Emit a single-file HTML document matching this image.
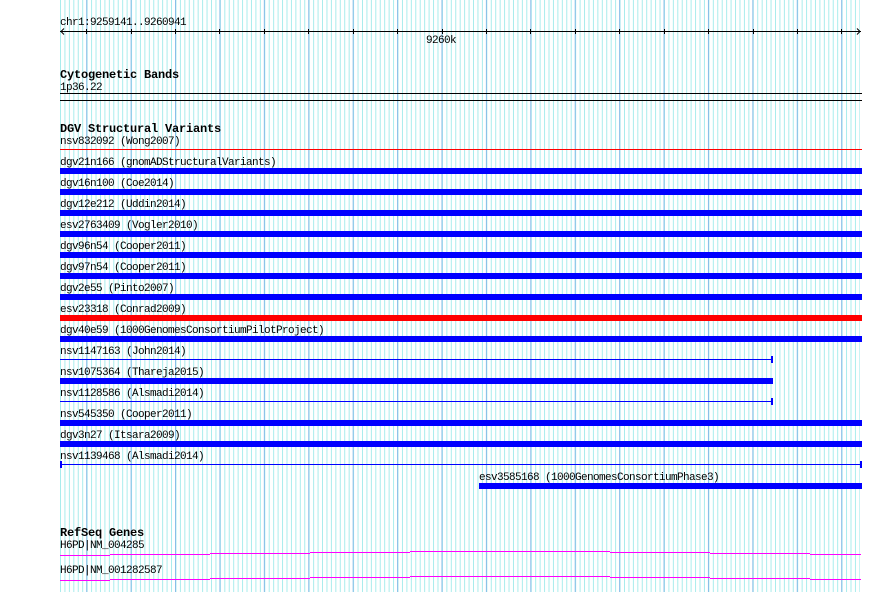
<!DOCTYPE html>
<html><head><meta charset="utf-8"><style>
html,body{margin:0;padding:0;background:#fff;width:890px;height:592px;overflow:hidden}
svg{display:block}
rect,line,path{shape-rendering:crispEdges}
text{font-family:"Liberation Mono","DejaVu Sans Mono",monospace;font-size:11px;letter-spacing:-0.6px;fill:#000}
.b{font-weight:bold;font-size:12px;letter-spacing:-0.2px}
</style></head><body>
<svg width="890" height="592" xmlns="http://www.w3.org/2000/svg">
<defs>
<pattern id="mn" patternUnits="userSpaceOnUse" x="60" y="0" width="4.441" height="10"><rect x="0" y="0" width="1" height="10" fill="#a8ecec"/></pattern>
<pattern id="mj" patternUnits="userSpaceOnUse" x="86.2" y="0" width="44.41" height="10"><rect x="0" y="0" width="1" height="10" fill="#88bde8"/></pattern>
</defs>
<rect x="60" y="0" width="800" height="592" fill="url(#mn)"/>
<rect x="60" y="0" width="800" height="592" fill="url(#mj)"/>

<text x="60" y="25">chr1:9259141..9260941</text>
<rect x="60" y="31" width="801" height="1" fill="#000"/>
<path d="M64 28.5 L61 31.5 L64 34.5 M857 28.5 L860 31.5 L857 34.5" stroke="#000" fill="none" style="shape-rendering:auto"/>
<g fill="#000">
<rect x="86" y="29" width="1" height="5"/><rect x="131" y="29" width="1" height="5"/><rect x="175" y="29" width="1" height="5"/><rect x="219" y="29" width="1" height="5"/><rect x="264" y="29" width="1" height="5"/><rect x="308" y="29" width="1" height="5"/><rect x="353" y="29" width="1" height="5"/><rect x="397" y="29" width="1" height="5"/><rect x="442" y="29" width="1" height="5"/><rect x="486" y="29" width="1" height="5"/><rect x="530" y="29" width="1" height="5"/><rect x="575" y="29" width="1" height="5"/><rect x="619" y="29" width="1" height="5"/><rect x="664" y="29" width="1" height="5"/><rect x="708" y="29" width="1" height="5"/><rect x="753" y="29" width="1" height="5"/><rect x="797" y="29" width="1" height="5"/><rect x="841" y="29" width="1" height="5"/>
</g>
<text x="426" y="43">9260k</text>

<text class="b" x="60" y="78">Cytogenetic Bands</text>
<text x="60" y="90">1p36.22</text>
<rect x="60" y="93" width="802" height="1" fill="#000"/>
<rect x="60" y="100" width="802" height="1" fill="#000"/>

<text class="b" x="60" y="132">DGV Structural Variants</text>
<text x="60" y="144">nsv832092 (Wong2007)</text>
<rect x="60" y="149" width="802" height="1" fill="#f00"/>
<text x="60" y="165">dgv21n166 (gnomADStructuralVariants)</text>
<rect x="60" y="168" width="802" height="6" fill="#00f"/>
<text x="60" y="186">dgv16n100 (Coe2014)</text>
<rect x="60" y="189" width="802" height="6" fill="#00f"/>
<text x="60" y="207">dgv12e212 (Uddin2014)</text>
<rect x="60" y="210" width="802" height="6" fill="#00f"/>
<text x="60" y="228">esv2763409 (Vogler2010)</text>
<rect x="60" y="231" width="802" height="6" fill="#00f"/>
<text x="60" y="249">dgv96n54 (Cooper2011)</text>
<rect x="60" y="252" width="802" height="6" fill="#00f"/>
<text x="60" y="270">dgv97n54 (Cooper2011)</text>
<rect x="60" y="273" width="802" height="6" fill="#00f"/>
<text x="60" y="291">dgv2e55 (Pinto2007)</text>
<rect x="60" y="294" width="802" height="6" fill="#00f"/>
<text x="60" y="312">esv23318 (Conrad2009)</text>
<rect x="60" y="315" width="802" height="6" fill="#f00"/>
<text x="60" y="333">dgv40e59 (1000GenomesConsortiumPilotProject)</text>
<rect x="60" y="336" width="802" height="6" fill="#00f"/>
<text x="60" y="354">nsv1147163 (John2014)</text>
<rect x="60" y="359" width="712" height="1" fill="#00f"/>
<rect x="771" y="356" width="2" height="7" fill="#00f"/>
<text x="60" y="375">nsv1075364 (Thareja2015)</text>
<rect x="60" y="378" width="713" height="6" fill="#00f"/>
<text x="60" y="396">nsv1128586 (Alsmadi2014)</text>
<rect x="60" y="401" width="712" height="1" fill="#00f"/>
<rect x="771" y="398" width="2" height="7" fill="#00f"/>
<text x="60" y="417">nsv545350 (Cooper2011)</text>
<rect x="60" y="420" width="802" height="6" fill="#00f"/>
<text x="60" y="438">dgv3n27 (Itsara2009)</text>
<rect x="60" y="441" width="802" height="6" fill="#00f"/>
<text x="60" y="459">nsv1139468 (Alsmadi2014)</text>
<rect x="60" y="464" width="802" height="1" fill="#00f"/>
<rect x="60" y="461" width="2" height="7" fill="#00f"/>
<rect x="860" y="461" width="2" height="7" fill="#00f"/>
<text x="479" y="480">esv3585168 (1000GenomesConsortiumPhase3)</text>
<rect x="479" y="483" width="383" height="6" fill="#00f"/>

<text class="b" x="60" y="536">RefSeq Genes</text>
<text x="60" y="548">H6PD|NM_004285</text>
<g fill="#f0f">
<rect x="60" y="555" width="50" height="1"/><rect x="110" y="554" width="100" height="1"/><rect x="210" y="553" width="100" height="1"/><rect x="310" y="552" width="100" height="1"/><rect x="410" y="551" width="100" height="1"/><rect x="510" y="551" width="100" height="1"/><rect x="610" y="552" width="100" height="1"/><rect x="710" y="553" width="100" height="1"/><rect x="810" y="554" width="51" height="1"/>
<rect x="60" y="580" width="50" height="1"/><rect x="110" y="579" width="100" height="1"/><rect x="210" y="578" width="100" height="1"/><rect x="310" y="577" width="100" height="1"/><rect x="410" y="576" width="100" height="1"/><rect x="510" y="576" width="100" height="1"/><rect x="610" y="577" width="100" height="1"/><rect x="710" y="578" width="100" height="1"/><rect x="810" y="579" width="51" height="1"/>
</g>
<text x="60" y="573">H6PD|NM_001282587</text>
</svg>
</body></html>
